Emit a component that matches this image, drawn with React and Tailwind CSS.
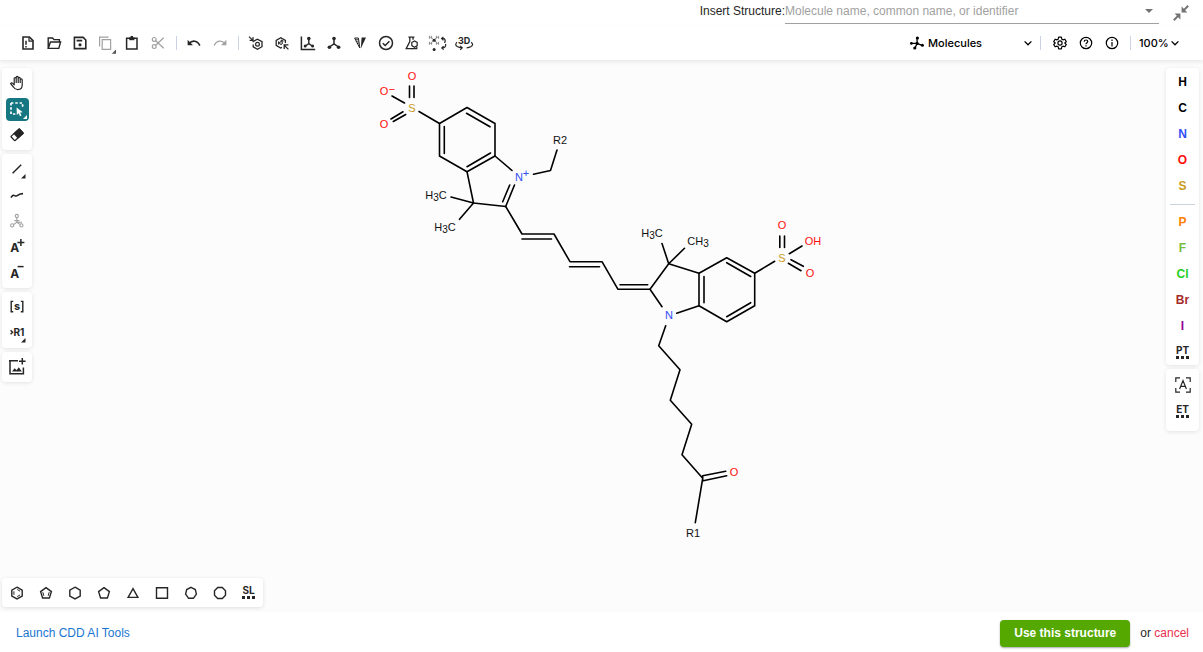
import React from "react";

const Svg = ({ children, className = "size-4", box = "0 0 16 16", ...rest }) => (
  <svg viewBox={box} className={`${className} shrink-0 overflow-visible`} fill="none" stroke="currentColor" strokeWidth="1.4" aria-hidden="true" {...rest}>
    {children}
  </svg>
);

const Corner = () => <path d="M16.5 13v4.5H12Z" fill="currentColor" stroke="none" />;

const fileIcons = [
  ["Clear canvas", <><path d="M3 2h6.4l3.600 3.600v8.400H3Z" strokeWidth="1.600" /><path d="M9 2.200v4h3.800" strokeWidth="1.200" /><path d="M6 5.800v4M6 11v1.500" strokeWidth="1.500" /></>],
  ["Open", <><path d="M2.2 13.4V3h4.4l1.4 1.6h5.4v2.2M2.2 13.4 4.4 7h10.2l-1.8 6.4Z" /></>],
  ["Save", <><path d="M2.400 2.400h8.800l2.600 2.600v8.600H2.400Z" strokeWidth="1.600" /><path d="M4.600 5.600h5.600" strokeWidth="1.800" /><circle cx="8" cy="9.800" r="1.600" fill="currentColor" stroke="none" /></>],
  ["Copy", <><path d="M1.600 11.400V2.200h9" strokeWidth="1.200" /><path d="M4.200 4.600h8.400v9.800H4.200Z" strokeWidth="1.200" /><g className="text-neutral-600"><path d="M18 14.600v4.200h-4.200Z" fill="currentColor" stroke="none" /></g></>, true],
  ["Paste", <><path d="M2.600 3.200h10.400v10.800H2.600Z" strokeWidth="1.500" /><path d="M5.200 2.400h5.200v2.800H5.200Z" fill="currentColor" stroke="none" /><path d="M7.800 1v2" strokeWidth="2.400" /></>],
  ["Cut", <><circle cx="4.200" cy="4.400" r="1.900" strokeWidth="1.200" /><circle cx="4.200" cy="11.600" r="1.900" strokeWidth="1.200" /><path d="m5.700 5.700 8 7.600M5.700 10.300l8-7.600" strokeWidth="1.300" /></>, true],
];

const historyIcons = [
  ["Undo", <><path d="M3.200 8.600C6 5 11.600 5.200 13.800 10.600" strokeWidth="1.600" /><path d="M1.600 4.800v5.400h5.400Z" fill="currentColor" stroke="none" /></>],
  ["Redo", <><path d="M12.800 8.600C10 5 4.400 5.200 2.200 10.600" strokeWidth="1.300" /><path d="M14.400 4.800v5.400H9Z" fill="currentColor" stroke="none" /></>, true],
];

const structureIcons = [
  ["Aromatize", <><path d="M5.200 7.200V6.400L9.400 4.200l4.600 2.500v5l-4.600 2.500-4.200-2.300V9.600" strokeWidth="1.300" /><circle cx="9.500" cy="9.200" r="1.900" strokeWidth="1.200" /><path d="M1 1.600 4.600 5.200M1.600 5.400h3.400V2" strokeWidth="1.200" /></>],
  ["Dearomatize", <><path d="M8 12.400 6.600 13 2.200 10.400v-5L6.800 2.800l4.600 2.600V8" strokeWidth="1.300" /><path d="M4.600 9.400V6.600M6.800 5l2.600 1.400" strokeWidth="1.200" /><circle cx="7" cy="8" r="1.400" strokeWidth="1" /><path d="m14.400 14.400-4-4M10.200 14V9.800h4.200" strokeWidth="1.300" /></>],
  ["Layout", <><path d="M1.400 1.600v12.800h13.800" strokeWidth="1.500" /><path d="M8.800 3.800v4.800L5.400 11M8.800 8.600l3.400 2.400" /><g fill="currentColor" stroke="none"><circle cx="8.800" cy="3.600" r="1.800" /><circle cx="5.200" cy="11" r="1.500" /><circle cx="12.600" cy="11" r="1.500" /></g></>],
  ["Clean up", <><path d="M8 3.200v5.600L3.400 12M8 8.800l4.600 3.200" strokeWidth="1.500" /><g fill="currentColor" stroke="none"><circle cx="8" cy="3.600" r="1.800" /><circle cx="3.400" cy="12.200" r="1.800" /><circle cx="12.600" cy="12.200" r="1.800" /></g></>],
  ["Calculate CIP", <><path d="M2.600 3h3.800l1.400 10Z" strokeWidth="1" /><path d="M3 4.400h3.600M3.800 6.200h3.200M4.800 8.200h2.400" strokeWidth=".8" /><path d="M9.600 2.600H14L8.800 13.400Z" fill="currentColor" stroke="none" /></>],
  ["Check structure", <><circle cx="8" cy="8" r="6.500" strokeWidth="1.500" /><path d="m4.800 8.200 2.400 2.300 4.200-4.300" strokeWidth="1.500" /></>],
  ["Calculated values", <><path d="M4.400 2.200h6M5.800 2.200v4.300L2.200 13.600h6.200M9 2.200v2.600" strokeWidth="1.300" /><path d="m7.800 7.400 2.700-1.500 2.700 1.500v3.200l-2.700 1.600-2.700-1.600Z" strokeWidth="1.200" /><path d="M7.400 13.600h5.400v-2" strokeWidth="1.200" /></>],
  ["Add or remove explicit hydrogens", <><path d="M-.6.800v3M1.600.800v3M-.6 2.300h2.200M6.400.800v3M8.600.800v3M6.400 2.300h2.200M-.6 6.800v3M1.600 6.800v3M-.6 8.300h2.200M6.400 6.800v3M8.600 6.800v3M6.400 8.300h2.200" stroke="#777" strokeWidth=".8" /><path d="m2.400 3.600 3.400 3.200M5.800 3.600 2.400 6.800" strokeWidth=".8" /><g fill="currentColor" stroke="none"><circle cx="4.100" cy="5.200" r="1.500" /><circle cx="4.100" cy="14.400" r="1.500" /></g><path d="M12 3.600h2.200q1.800 1.600.400 4.400M13.400 1.800 11.600 3.600l1.800 1.800M15.600 9q.800 3.600-3.600 4M13.600 11.200 11.800 13l1.800 1.600" strokeWidth="1.200" /></>],
  ["3D viewer", <><text x="8.200" y="8.600" textAnchor="middle" fill="currentColor" stroke="none" className="font-['Inter',sans-serif] text-[9px] font-bold">3D</text><path d="M1 7.200Q-1.600 9.800 1.200 11.600q2 1.200 4.400 1.200M4.200 10.800 6.200 12.800l-2 2M15.200 7.200q2.800 2.600 0 4.400-2 1.200-4.600 1.300" strokeWidth="1.200" /></>],
];

const selectionTools = [
  ["Hand tool", <Svg><path d="M5.200 9V3.600a1 1 0 0 1 2 0V2.400a1 1 0 0 1 2 0v1a1 1 0 0 1 2 0v1.400a1 1 0 0 1 2 0V10c0 2.800-1.800 4.600-4.400 4.600-2.200 0-3.400-1-4.400-2.600L1.600 8.600q1-1.200 2.200-.2L5.200 9.800ZM7.200 3v5M9.200 3v5M11.200 4v4" strokeWidth="1.200" strokeLinejoin="round" /></Svg>],
  ["Rectangle selection", null],
  ["Erase", <Svg><g transform="rotate(-42 8 8)"><rect x="2.400" y="5" width="11.400" height="5.800" rx=".6" strokeWidth="1.300" /><path d="M7 5h6.800v5.800H7Z" fill="currentColor" /></g></Svg>],
];

const drawTools = [
  ["Single bond", <Svg><path d="m3.600 12.200 8.600-8.400" strokeWidth="1.500" /><Corner /></Svg>],
  ["Chain", <Svg><path d="M2 10.600c1.200-2 2.400-2.800 3.600-2s2 .7 3.400-.4 2.800-1.600 5-1.600" strokeWidth="1.600" /></Svg>],
  ["Reaction mapping", <Svg className="size-4 text-neutral-400"><g strokeWidth="1.100"><circle cx="7.800" cy="3" r="1.600" /><circle cx="3.200" cy="12.400" r="1.600" /><circle cx="12.400" cy="12.400" r="1.600" /><path d="M7.800 4.800v4.400L4.600 11.600M7.800 9.200l3.200 2.200" /><path d="M5.400 7.600h5M8 9.200h5" /></g></Svg>],
  ["Charge plus", <Svg><text x="1.200" y="13" fill="currentColor" stroke="none" className="font-['Inter',sans-serif] text-[12px] font-bold">A</text><path d="M8.400 3.600h7M11.900.1v7" strokeWidth="1.500" /></Svg>],
  ["Charge minus", <Svg><text x="1.200" y="13" fill="currentColor" stroke="none" className="font-['Inter',sans-serif] text-[12px] font-bold">A</text><path d="M8.600 1.600h6" strokeWidth="1.500" /></Svg>],
];

const groupTools = [
  ["S-Group", <Svg><path d="M4.200 2.400H2.200v10.400h2M11.800 2.400h2v10.400h-2" strokeWidth="1.400" /><text x="8" y="11" textAnchor="middle" fill="currentColor" stroke="none" className="font-['Inter',sans-serif] text-[11px] font-bold">s</text></Svg>],
  ["R-Group label", <Svg><path d="m1.600 5.200 2 2-2 2" strokeWidth="1.400" /><text x="4.400" y="11" fill="currentColor" stroke="none" className="font-['Inter',sans-serif] text-[10px] font-bold">R1</text><Corner /></Svg>],
];

const imageTools = [
  ["Add image", <Svg className="size-[18px]" box="0 0 18 18"><path d="M10 2.800H2v13h13.400V9.400M1 2.800h8.600" strokeWidth="1.500" /><path d="M11 3.200h6.600M14.300 0v6.400" strokeWidth="1.500" /><path d="m4 13.600 2.600-3.400 2 2 2.200-3 3 4.400Z" fill="currentColor" stroke="none" /></Svg>],
];

const ToolButton = ({ label, children }) => (
  <button type="button" aria-label={label} className="flex h-[26px] w-full items-center justify-center">{children}</button>
);

const ToolGroup = ({ tools }) => (
  <div className="w-[30px] rounded bg-white py-0.5 shadow-[0_1px_4px_rgba(0,0,0,0.1)]">
    {tools.map(([label, icon]) => (
      <ToolButton key={label} label={label}>
        {icon || (
          <span className="flex size-[23px] items-center justify-center rounded bg-[#167782] text-white">
            <Svg><path d="M2 2h11.600v5M2 2v11h6" strokeDasharray="2.4 1.9" strokeWidth="1.700" /><path d="m7.600 6.400 6.200 4.800-2.700.4 1.400 3-1.500.7-1.400-3-1.800 1.800Z" fill="currentColor" stroke="none" /><path d="M18 14v4h-4Z" fill="currentColor" stroke="none" /></Svg>
          </span>
        )}
      </ToolButton>
    ))}
  </div>
);

const BarButtons = ({ items }) =>
  items.map(([label, icon, disabled]) => (
    <button key={label} type="button" aria-label={label} disabled={disabled} className="flex h-7 w-[26px] items-center justify-center disabled:text-neutral-400">
      <Svg>{icon}</Svg>
    </button>
  ));

const Divider = () => <span className="h-3.5 w-px bg-[#cad3e4]" />;

const Chevron = () => <Svg className="size-2" box="0 0 8 8"><path d="m.6 2.400 3.400 3.400 3.400-3.400" strokeWidth="1.300" /></Svg>;

const Dots = ({ text }) => (
  <span className="flex flex-col items-center gap-0.5 font-['Inter',sans-serif] text-[10px] leading-2 font-bold text-neutral-800">
    {text}
    <span className="flex gap-0.5">
      <span className="size-[3px] bg-current" /><span className="size-[3px] bg-current" /><span className="size-[3px] bg-current" />
    </span>
  </span>
);

const Atoms = ({ atoms }) =>
  atoms.map(([symbol, color]) => (
    <button key={symbol} type="button" className={`flex h-[26px] w-full items-center justify-center text-[12px] font-bold ${color}`}>{symbol}</button>
  ));

const commonAtoms = [["H", "text-black"], ["C", "text-black"], ["N", "text-[#304ff7]"], ["O", "text-[#ff0d0d]"], ["S", "text-[#c99a19]"]];
const moreAtoms = [["P", "text-[#ff8000]"], ["F", "text-[#78bc42]"], ["Cl", "text-[#1fd01f]"], ["Br", "text-[#a62929]"], ["I", "text-[#940094]"]];

const rings = [
  ["Benzene", <><path d="m8 2.200 5.200 2.900v5.900L8 13.900l-5.200-2.900V5.100Z" /><path d="M4.900 6.300v3.500M8.200 4.500l2.900 1.700M11.100 9.900l-2.900 1.700" strokeWidth="1" /></>],
  ["Cyclopentadiene", <><path d="m8 2.600 5.400 4-2 6.400H4.600l-2-6.400Z" /><path d="m4.800 7.200 1 3.600M11.200 7.200l-1 3.600" strokeWidth="1" /></>],
  ["Cyclohexane", <path d="m8 2.200 5.200 2.900v5.900L8 13.900l-5.200-2.900V5.100Z" />],
  ["Cyclopentane", <path d="m8 2.600 5.400 4-2 6.400H4.600l-2-6.400Z" />],
  ["Cyclopropane", <path d="m8 3.600 4.900 8.800H3.100Z" />],
  ["Cyclobutane", <path d="M2.500 2.700h11v10.600h-11Z" />],
  ["Cycloheptane", <path d="m8 2.400 4.300 2.100 1.100 4.600-3 4.200H5.600L2.600 9.100l1.100-4.600Z" />],
  ["Cyclooctane", <path d="M5.700 2.500h4.600l3.200 3.200v4.600l-3.200 3.200H5.700l-3.200-3.200V5.700Z" />],
];

const bonds = [
  "M409.500 86v11.500M414 86v11.500M392 96l12.500 7M391 119l12-7.200M393.300 121.500l12.400-7M419 111.500l20.500 12",
  "M439.500 123.500 467 107.500l28 16V156l-28 15.700L439.500 156ZM444.300 126.500v27M466.500 113.300 490 126.800M490.500 153 467 166.700",
  "M495 156l17 14.500M533.500 174.300l17-3.800 6.500-20.500M514.500 185 505.700 206.500 473.500 203 467 171.700M509.700 185l-7 16.700",
  "M451 197l22.500 6-14 16.300M505.700 206.500 522 234h32l16 27.700h32l16 27.600h32M522 239h29.500M569.500 266.800h30M620 284.700h27.700",
  "M662 306.700l-12-17.400 18.700-25.600L699 273.300M662 243.500l6.700 20.200 15.800-15.400M676.700 313.300l22.300-7.600",
  "M699 273.300l27.700-15.600 28 15.600v32.400l-28 16-27.700-16ZM704 276.500v26.300M726.700 262.700l24 13.800M750.700 302.700l-24 14",
  "M754.700 273.300l20-12M779.800 236v11.500M784.500 236v11.500M789.300 253.700 802 246M791 259.700l12.300 6.600M788.300 263.300l12.700 7.400",
  "M665.700 325.700l-7 20L680 369.700l-9.700 30.600 21.400 24L682 454.700l20.700 23.600-7.400 44.400M702.700 475.700l23-4.400M703.300 480.700l23.400-5M702.700 475.700v5",
];

const Sub = ({ children }) => <tspan dy="2" className="text-[10px]">{children}</tspan>;

const Molecule = () => (
  <svg viewBox="369 60 460 490" className="h-[490px] w-[460px]" role="img" aria-label="Cyanine dye structure">
    <g fill="none" stroke="#000" strokeWidth="1.600" strokeLinejoin="round" strokeLinecap="round">
      {bonds.map((d) => <path key={d} d={d} />)}
    </g>
    <g textAnchor="middle" className="font-['Liberation_Sans',Arial,sans-serif] text-[11px]">
      <g fill="#ff0d0d">
        <text x="412" y="80">O</text>
        <text x="384" y="95">O</text>
        <text x="392" y="93">−</text>
        <text x="384" y="128">O</text>
        <text x="782" y="229">O</text>
        <text x="813" y="245">OH</text>
        <text x="810" y="277">O</text>
        <text x="734" y="476">O</text>
      </g>
      <g fill="#c99a19">
        <text x="412" y="112">S</text>
        <text x="782" y="262">S</text>
      </g>
      <g fill="#304ff7">
        <text x="519" y="181">N</text>
        <text x="526" y="177">+</text>
        <text x="669" y="319">N</text>
      </g>
      <g fill="#111">
        <text x="560" y="144">R2</text>
        <text x="693" y="537">R1</text>
        <text x="436" y="199">H<Sub>3</Sub><tspan dy="-2">C</tspan></text>
        <text x="445" y="231">H<Sub>3</Sub><tspan dy="-2">C</tspan></text>
        <text x="652" y="237">H<Sub>3</Sub><tspan dy="-2">C</tspan></text>
        <text x="698" y="245">CH<Sub>3</Sub></text>
      </g>
    </g>
  </svg>
);

export default function App() {
  return (
    <div className="flex min-h-screen flex-col bg-white font-['Liberation_Sans',Arial,sans-serif] text-neutral-800">
      <header className="flex h-[26px] items-start justify-end pr-3.5 text-[12px]">
        <label htmlFor="structure-name" className="leading-[22px]">Insert Structure:</label>
        <div className="flex h-6 w-[374px] items-center border-b border-neutral-400 pr-1 pb-px">
          <input id="structure-name" type="text" placeholder="Molecule name, common name, or identifier" className="min-w-0 flex-1 bg-transparent outline-none placeholder:text-neutral-400" />
          <button type="button" aria-label="Show suggestions" className="flex size-3 items-center justify-center text-neutral-500">
            <Svg className="size-2" box="0 0 8 8"><path d="M0 2h8L4 6Z" fill="currentColor" stroke="none" /></Svg>
          </button>
        </div>
        <button type="button" aria-label="Exit full screen" className="ml-3.5 flex h-[26px] items-center text-neutral-500">
          <Svg><path d="M.8 15.200 5.600 10.400M15.200.8l-4.800 4.800" strokeWidth="2" /><path d="M1.600 8.600h5.800v5.800L5.400 12.400 3.600 10.600ZM14.400 7.400H8.600V1.600l2 2 1.800 1.800Z" fill="currentColor" stroke="none" /></Svg>
        </button>
      </header>

      <div className="z-10 flex h-[34px] items-center justify-between pr-6 pl-[15px] shadow-[0_2px_4px_rgba(0,0,0,0.08)]">
        <div role="toolbar" aria-label="Main tools" className="flex items-center">
          <BarButtons items={fileIcons} />
          <span className="flex w-2.5 justify-center"><Divider /></span>
          <BarButtons items={historyIcons} />
          <span className="flex w-2.5 justify-center"><Divider /></span>
          <BarButtons items={structureIcons} />
        </div>
        <div className="flex items-center font-['Inter',sans-serif] text-[11px] font-medium text-black">
          <Svg className="size-3.5" box="0 0 14 14"><path d="M1.500 7.400h5.600l5 2M7.100 7.400V2.200M7.100 7.400 5 12" strokeWidth="1.300" /><g fill="currentColor" stroke="none"><circle cx="1.400" cy="7.400" r="1.400" /><circle cx="7.400" cy="2" r="1.600" /><circle cx="7.100" cy="7.400" r="1.600" /><circle cx="12.400" cy="9.200" r="1.500" /><circle cx="4.800" cy="12" r="1.600" /></g></Svg>
          <select aria-label="Editor mode" defaultValue="Molecules" className="ml-1 w-24 appearance-none bg-transparent outline-none">
            <option>Molecules</option>
            <option>Macromolecules</option>
          </select>
          <Chevron />
          <span className="mr-1.5 ml-2 flex"><Divider /></span>
          <button type="button" aria-label="Settings" className="flex h-7 w-[26px] items-center justify-center">
            <Svg className="size-3.5" box="0 0 24 24" strokeWidth="2"><circle cx="12" cy="12" r="3.600" /><path d="M9.600 2h4.800l.7 3.400 2 1.200 3.300-1.100 2.400 4.100-2.600 2.400 2.600 2.400-2.400 4.100-3.300-1.100-2 1.200-.7 3.400H9.600l-.7-3.400-2-1.200-3.300 1.100-2.400-4.100L3.800 12 1.200 9.600l2.400-4.100 3.300 1.100 2-1.200Z" strokeLinejoin="round" /></Svg>
          </button>
          <button type="button" aria-label="Help" className="flex h-7 w-[26px] items-center justify-center">
            <Svg className="size-3.5" box="0 0 14 14"><circle cx="7" cy="7" r="5.700" strokeWidth="1.200" /><path d="M5.200 5.700Q5.300 4 7 4t1.800 1.600C8.800 6.800 7 6.900 7 8.300M7 9.300v1.300" strokeWidth="1.200" /></Svg>
          </button>
          <button type="button" aria-label="About" className="flex h-7 w-[26px] items-center justify-center">
            <Svg className="size-3.5" box="0 0 14 14"><circle cx="7" cy="7" r="5.700" strokeWidth="1.200" /><path d="M7 3.600v1.300M7 6v4.400" strokeWidth="1.200" /></Svg>
          </button>
          <span className="flex w-2.5 justify-center"><Divider /></span>
          <select aria-label="Zoom" defaultValue="100%" className="ml-1 appearance-none bg-transparent outline-none">
            <option>100%</option>
          </select>
          <span className="ml-0.5"><Chevron /></span>
        </div>
      </div>

      <main className="flex flex-1 flex-col bg-[#fcfcfc]">
        <div className="flex flex-1 items-start justify-between pr-1 pl-0.5">
          <div role="toolbar" aria-label="Drawing tools" className="flex flex-col gap-1 pt-2">
            <ToolGroup tools={selectionTools} />
            <ToolGroup tools={drawTools} />
            <ToolGroup tools={groupTools} />
            <ToolGroup tools={imageTools} />
          </div>
          <Molecule />
          <div role="toolbar" aria-label="Atoms" className="flex flex-col gap-1 pt-2">
            <div className="w-[33px] rounded bg-white pt-px shadow-[0_1px_4px_rgba(0,0,0,0.1)]">
              <Atoms atoms={commonAtoms} />
              <hr className="mx-1 mt-[5px] mb-1 border-[#cad3dd]" />
              <Atoms atoms={moreAtoms} />
              <ToolButton label="Periodic table"><Dots text="PT" /></ToolButton>
            </div>
            <div className="w-[33px] rounded bg-white pt-[3px] pb-[7px] shadow-[0_1px_4px_rgba(0,0,0,0.1)]">
              <ToolButton label="Any atom">
                <Svg><path d="M.8 5V.8H5M11 .8h4.200V5M15.200 11v4.200H11M5 15.200H.8V11M4.600 12 8 3.600 11.400 12M5.600 9.400h4.800" strokeWidth="1.200" /></Svg>
              </ToolButton>
              <ToolButton label="Extended table"><Dots text="ET" /></ToolButton>
            </div>
          </div>
        </div>
        <div role="toolbar" aria-label="Templates" className="mb-[5px] ml-0.5 flex h-[29px] self-start rounded bg-white shadow-[0_1px_4px_rgba(0,0,0,0.12)]">
          {rings.map(([label, icon]) => (
            <button key={label} type="button" aria-label={label} className="flex w-[29px] items-center justify-center"><Svg>{icon}</Svg></button>
          ))}
          <button type="button" aria-label="Structure library" className="flex w-[29px] items-center justify-center"><Dots text="SL" /></button>
        </div>
      </main>

      <footer className="flex h-10 items-center justify-between pt-0.5 pr-3.5 pl-4 text-[12px]">
        <a href="#tools" className="text-[#1976d2]">Launch CDD AI Tools</a>
        <div className="flex items-center gap-2.5">
          <button type="button" className="h-[27px] rounded-sm bg-[#54a800] px-3.5 font-bold text-white shadow-[0_1px_2px_rgba(0,0,0,0.35)]">Use this structure</button>
          <span>or <a href="#cancel" className="text-[#e8304f]">cancel</a></span>
        </div>
      </footer>
    </div>
  );
}
